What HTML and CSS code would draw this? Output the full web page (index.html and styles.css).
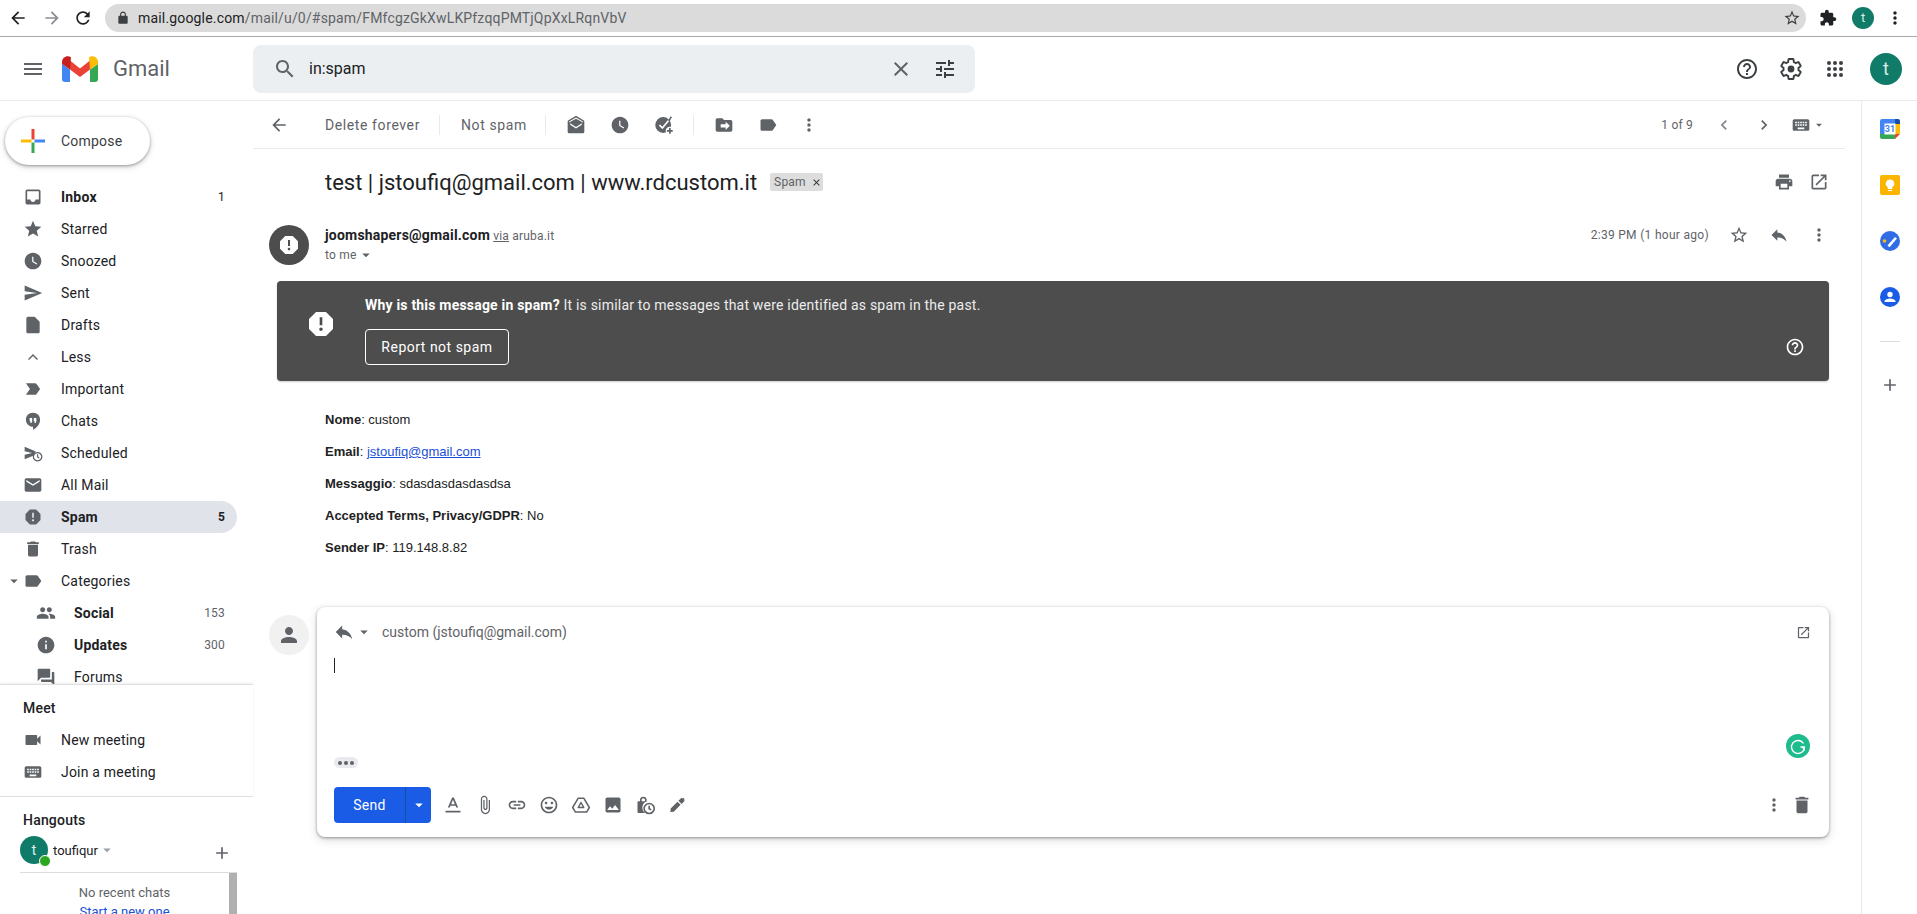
FILE: index.html
```html
<!DOCTYPE html>
<html lang="en">
<head>
<meta charset="utf-8">
<title>Gmail</title>
<link rel="stylesheet" href="styles.css">
</head>
<body>
<svg class="sprite" xmlns="http://www.w3.org/2000/svg">
<symbol id="menu" viewBox="0 0 24 24"><path d="M3 18h18v-2H3v2zm0-5h18v-2H3v2zm0-7v2h18V6H3z"/></symbol>
<symbol id="search" viewBox="0 0 24 24"><path d="M15.5 14h-.79l-.28-.27C15.41 12.59 16 11.11 16 9.5 16 5.91 13.09 3 9.5 3S3 5.91 3 9.5 5.91 16 9.5 16c1.61 0 3.09-.59 4.23-1.57l.27.28v.79l5 4.99L20.49 19l-4.99-5zm-6 0C7.01 14 5 11.99 5 9.5S7.01 5 9.5 5 14 7.01 14 9.5 11.99 14 9.5 14z"/></symbol>
<symbol id="close" viewBox="0 0 24 24"><path d="M19 6.41L17.59 5 12 10.59 6.41 5 5 6.41 10.59 12 5 17.59 6.41 19 12 13.41 17.59 19 19 17.59 13.41 12z"/></symbol>
<symbol id="tune" viewBox="0 0 24 24"><path d="M3 17v2h6v-2H3zM3 5v2h10V5H3zm10 16v-2h8v-2h-8v-2h-2v6h2zM7 9v2H3v2h4v2h2V9H7zm14 4v-2H11v2h10zm-6-4h2V7h4V5h-4V3h-2v6z"/></symbol>
<symbol id="help" viewBox="0 0 24 24"><path d="M11 18h2v-2h-2v2zm1-16C6.48 2 2 6.48 2 12s4.48 10 10 10 10-4.48 10-10S17.52 2 12 2zm0 18c-4.41 0-8-3.59-8-8s3.59-8 8-8 8 3.59 8 8-3.59 8-8 8zm0-14c-2.21 0-4 1.79-4 4h2c0-1.1.9-2 2-2s2 .9 2 2c0 2-3 1.75-3 5h2c0-2.25 3-2.5 3-5 0-2.21-1.79-4-4-4z"/></symbol>
<symbol id="gear" viewBox="0 0 24 24"><path fill="none" stroke="currentColor" stroke-width="1.9" d="M19.43 12.98c.04-.32.07-.64.07-.98s-.03-.66-.07-.98l2.11-1.65c.19-.15.24-.42.12-.64l-2-3.46c-.12-.22-.39-.3-.61-.22l-2.49 1c-.52-.4-1.08-.73-1.69-.98l-.38-2.65C14.46 2.18 14.25 2 14 2h-4c-.25 0-.46.18-.49.42l-.38 2.65c-.61.25-1.17.59-1.69.98l-2.49-1c-.23-.09-.49 0-.61.22l-2 3.46c-.13.22-.07.49.12.64l2.11 1.65c-.04.32-.07.65-.07.98s.03.66.07.98l-2.11 1.65c-.19.15-.24.42-.12.64l2 3.46c.12.22.39.3.61.22l2.49-1c.52.4 1.08.73 1.69.98l.38 2.65c.03.24.24.42.49.42h4c.25 0 .46-.18.49-.42l.38-2.65c.61-.25 1.17-.59 1.69-.98l2.49 1c.23.09.49 0 .61-.22l2-3.46c.12-.22.07-.49-.12-.64l-2.11-1.65z"/><circle cx="12" cy="12" r="3.4"/></symbol>
<symbol id="apps" viewBox="0 0 24 24"><circle cx="6" cy="6" r="2"/><circle cx="12" cy="6" r="2"/><circle cx="18" cy="6" r="2"/><circle cx="6" cy="12" r="2"/><circle cx="12" cy="12" r="2"/><circle cx="18" cy="12" r="2"/><circle cx="6" cy="18" r="2"/><circle cx="12" cy="18" r="2"/><circle cx="18" cy="18" r="2"/></symbol>
<symbol id="back" viewBox="0 0 24 24"><path d="M20 11H7.83l5.59-5.59L12 4l-8 8 8 8 1.41-1.41L7.83 13H20v-2z"/></symbol>
<symbol id="forward" viewBox="0 0 24 24"><path d="M4 11h12.17l-5.59-5.59L12 4l8 8-8 8-1.41-1.41L16.17 13H4v-2z"/></symbol>
<symbol id="refresh" viewBox="0 0 24 24"><path d="M17.65 6.35C16.2 4.9 14.21 4 12 4c-4.42 0-7.99 3.58-7.99 8s3.57 8 7.99 8c3.73 0 6.84-2.55 7.73-6h-2.08c-.82 2.33-3.04 4-5.65 4-3.31 0-6-2.69-6-6s2.69-6 6-6c1.66 0 3.14.69 4.22 1.78L13 11h7V4l-2.35 2.35z"/></symbol>
<symbol id="lock" viewBox="0 0 24 24"><path d="M18 8h-1V6c0-2.76-2.24-5-5-5S7 3.24 7 6v2H6c-1.1 0-2 .9-2 2v10c0 1.1.9 2 2 2h12c1.1 0 2-.9 2-2V10c0-1.1-.9-2-2-2zM9 6c0-1.66 1.34-3 3-3s3 1.34 3 3v2H9V6z"/></symbol>
<symbol id="puzzle" viewBox="0 0 24 24"><path d="M20.5 11H19V7c0-1.1-.9-2-2-2h-4V3.5C13 2.12 11.88 1 10.5 1S8 2.12 8 3.5V5H4c-1.1 0-1.99.9-1.99 2v3.8H3.5c1.49 0 2.7 1.21 2.7 2.7s-1.21 2.7-2.7 2.7H2V20c0 1.1.9 2 2 2h3.8v-1.5c0-1.49 1.21-2.7 2.7-2.7 1.49 0 2.7 1.21 2.7 2.7V22H17c1.1 0 2-.9 2-2v-4h1.5c1.38 0 2.5-1.12 2.5-2.5S21.88 11 20.5 11z"/></symbol>
<symbol id="inbox" viewBox="0 0 24 24"><path d="M19 3H5c-1.1 0-2 .9-2 2v14c0 1.1.9 2 2 2h14c1.1 0 2-.9 2-2V5c0-1.1-.9-2-2-2zm0 12h-4c0 1.66-1.35 3-3 3s-3-1.34-3-3H5V5h14v10z"/></symbol>
<symbol id="star" viewBox="0 0 24 24"><path d="M12 17.27L18.18 21l-1.64-7.03L22 9.24l-7.19-.61L12 2 9.19 8.63 2 9.24l5.46 4.73L5.82 21z"/></symbol>
<symbol id="star-o" viewBox="0 0 24 24"><path d="M22 9.24l-7.19-.62L12 2 9.19 8.63 2 9.24l5.46 4.73L5.82 21 12 17.27 18.18 21l-1.63-7.03L22 9.24zM12 15.4l-3.76 2.27 1-4.28-3.32-2.88 4.38-.38L12 6.1l1.71 4.04 4.38.38-3.32 2.88 1 4.28L12 15.4z"/></symbol>
<symbol id="clock" viewBox="0 0 24 24"><path d="M12 2C6.5 2 2 6.5 2 12s4.5 10 10 10 10-4.5 10-10S17.5 2 12 2zm4.2 14.2L11 13V7h1.5v5.2l4.5 2.7-.8 1.3z"/></symbol>
<symbol id="send" viewBox="0 0 24 24"><path d="M2.01 21L23 12 2.01 3 2 10l15 2-15 2z"/></symbol>
<symbol id="draft" viewBox="0 0 24 24"><path d="M14 2H6c-1.1 0-1.99.9-1.99 2L4 20c0 1.1.89 2 1.99 2H18c1.1 0 2-.9 2-2V8l-6-6z"/></symbol>
<symbol id="less" viewBox="0 0 24 24"><path d="M12 8.5l-6 6 1.2 1.2 4.8-4.8 4.8 4.8 1.2-1.2z"/></symbol>
<symbol id="important" viewBox="0 0 24 24"><path d="M3.5 18.99l11 .01c.67 0 1.27-.33 1.63-.84L20.5 12l-4.37-6.16c-.36-.51-.96-.84-1.63-.84l-11 .01L8.34 12 3.5 18.99z"/></symbol>
<symbol id="chats" viewBox="0 0 24 24"><path d="M12 2C6.8 2 3.5 5.8 3.5 10.5S7.3 19 12 19v3.5c4.9-2.4 8.500-7 8.500-12C20.500 5.800 17.200 2 12 2zM11 12.500l-1 2H8.500l1-2H8V8.500h3v4zm5 0l-1 2h-1.500l1-2H13V8.500h3v4z"/></symbol>
<symbol id="scheduled" viewBox="0 0 24 24"><path d="M2 19.500L13 15a6.500 6.500 0 0 1 2.500-4.700L2 4.500V10l9 2-9 2z"/><path fill="none" stroke="currentColor" stroke-width="1.5" d="M17.500 11.500a5 5 0 1 0 .01 0zM17.500 13.500v3.200l2 1.200"/></symbol>
<symbol id="mail" viewBox="0 0 24 24"><path d="M20 4H4c-1.100 0-1.990.9-1.990 2L2 18c0 1.100.9 2 2 2h16c1.100 0 2-.9 2-2V6c0-1.100-.9-2-2-2zm0 4l-8 5-8-5V6l8 5 8-5v2z"/></symbol>
<symbol id="report" viewBox="0 0 24 24"><path d="M15.730 3H8.270L3 8.270v7.460L8.270 21h7.460L21 15.730V8.270L15.730 3zM12 17.300c-.72 0-1.300-.58-1.300-1.300 0-.72.58-1.300 1.300-1.300.72 0 1.300.58 1.300 1.300 0 .72-.58 1.300-1.300 1.300zm1-4.300h-2V7h2v6z"/></symbol>
<symbol id="trash" viewBox="0 0 24 24"><path d="M6 19c0 1.100.9 2 2 2h8c1.100 0 2-.9 2-2V7H6v12zM19 4h-3.500l-1-1h-5l-1 1H5v2h14V4z"/></symbol>
<symbol id="label" viewBox="0 0 24 24"><path d="M17.630 5.840C17.270 5.330 16.670 5 16 5L5 5.010C3.900 5.010 3 5.900 3 7v10c0 1.100.9 1.990 2 1.990L16 19c.67 0 1.270-.33 1.630-.84L22 12l-4.370-6.160z"/></symbol>
<symbol id="people" viewBox="0 0 24 24"><path d="M16 11c1.660 0 2.990-1.340 2.990-3S17.660 5 16 5c-1.660 0-3 1.340-3 3s1.340 3 3 3zm-8 0c1.660 0 2.990-1.340 2.990-3S9.660 5 8 5C6.340 5 5 6.340 5 8s1.340 3 3 3zm0 2c-2.330 0-7 1.170-7 3.500V19h14v-2.500c0-2.330-4.670-3.500-7-3.500zm8 0c-.29 0-.62.02-.97.05 1.160.84 1.970 1.970 1.970 3.450V19h6v-2.500c0-2.330-4.670-3.500-7-3.500z"/></symbol>
<symbol id="info" viewBox="0 0 24 24"><path d="M12 2C6.480 2 2 6.480 2 12s4.480 10 10 10 10-4.480 10-10S17.520 2 12 2zm1 15h-2v-6h2v6zm0-8h-2V7h2v2z"/></symbol>
<symbol id="forum" viewBox="0 0 24 24"><path d="M21 6h-2v9H6v2c0 .55.45 1 1 1h11l4 4V7c0-.55-.45-1-1-1zm-4 6V3c0-.55-.45-1-1-1H3c-.55 0-1 .45-1 1v14l4-4h10c.55 0 1-.45 1-1z"/></symbol>
<symbol id="video" viewBox="0 0 24 24"><path d="M17 10.500V7c0-.55-.45-1-1-1H4c-.55 0-1 .45-1 1v10c0 .55.45 1 1 1h12c.55 0 1-.45 1-1v-3.500l4 4v-11l-4 4z"/></symbol>
<symbol id="keyboard" viewBox="0 0 24 24"><path d="M20 5H4c-1.100 0-1.990.9-1.990 2L2 17c0 1.100.9 2 2 2h16c1.100 0 2-.9 2-2V7c0-1.100-.9-2-2-2zm-9 3h2v2h-2V8zm0 3h2v2h-2v-2zM8 8h2v2H8V8zm0 3h2v2H8v-2zm-1 2H5v-2h2v2zm0-3H5V8h2v2zm9 7H8v-2h8v2zm0-4h-2v-2h2v2zm0-3h-2V8h2v2zm3 3h-2v-2h2v2zm0-3h-2V8h2v2z"/></symbol>
<symbol id="more" viewBox="0 0 24 24"><path d="M12 8c1.100 0 2-.9 2-2s-.9-2-2-2-2 .9-2 2 .9 2 2 2zm0 2c-1.100 0-2 .9-2 2s.9 2 2 2 2-.9 2-2-.9-2-2-2zm0 6c-1.100 0-2 .9-2 2s.9 2 2 2 2-.9 2-2-.9-2-2-2z"/></symbol>
<symbol id="print" viewBox="0 0 24 24"><path d="M19 8H5c-1.660 0-3 1.340-3 3v6h4v4h12v-4h4v-6c0-1.660-1.340-3-3-3zm-3 11H8v-5h8v5zm3-7c-.55 0-1-.45-1-1s.45-1 1-1 1 .45 1 1-.45 1-1 1zm-1-9H6v4h12V3z"/></symbol>
<symbol id="open" viewBox="0 0 24 24"><path d="M19 19H5V5h7V3H5c-1.110 0-2 .9-2 2v14c0 1.100.89 2 2 2h14c1.100 0 2-.9 2-2v-7h-2v7zM14 3v2h3.590l-9.830 9.830 1.410 1.410L19 6.410V10h2V3h-7z"/></symbol>
<symbol id="reply" viewBox="0 0 24 24"><path d="M10 9V5l-7 7 7 7v-4.100c5 0 8.500 1.600 11 5.100-1-5-4-10-11-11z"/></symbol>
<symbol id="person" viewBox="0 0 24 24"><path d="M12 12c2.210 0 4-1.790 4-4s-1.790-4-4-4-4 1.790-4 4 1.790 4 4 4zm0 2c-2.670 0-8 1.340-8 4v2h16v-2c0-2.660-5.330-4-8-4z"/></symbol>
<symbol id="attach" viewBox="0 0 24 24"><path d="M16.500 6v11.500c0 2.210-1.790 4-4 4s-4-1.790-4-4V5c0-1.380 1.120-2.500 2.500-2.500s2.500 1.120 2.500 2.500v10.500c0 .55-.45 1-1 1s-1-.45-1-1V6H10v9.500c0 1.380 1.120 2.500 2.500 2.500s2.500-1.120 2.500-2.500V5c0-2.210-1.790-4-4-4S7 2.790 7 5v12.500c0 3.040 2.460 5.500 5.500 5.500s5.500-2.460 5.500-5.500V6h-1.500z"/></symbol>
<symbol id="link" viewBox="0 0 24 24"><path d="M3.900 12c0-1.710 1.390-3.100 3.100-3.100h4V7H7c-2.760 0-5 2.240-5 5s2.240 5 5 5h4v-1.900H7c-1.710 0-3.100-1.390-3.100-3.100zM8 13h8v-2H8v2zm9-6h-4v1.900h4c1.710 0 3.100 1.390 3.100 3.100s-1.390 3.100-3.100 3.100h-4V17h4c2.760 0 5-2.240 5-5s-2.240-5-5-5z"/></symbol>
<symbol id="emoji" viewBox="0 0 24 24"><path d="M11.990 2C6.470 2 2 6.480 2 12s4.470 10 9.990 10C17.520 22 22 17.520 22 12S17.520 2 11.990 2zM12 20c-4.420 0-8-3.580-8-8s3.580-8 8-8 8 3.580 8 8-3.580 8-8 8zm3.500-9c.83 0 1.500-.67 1.500-1.500S16.330 8 15.500 8 14 8.670 14 9.500s.67 1.500 1.500 1.500zm-7 0c.83 0 1.500-.67 1.500-1.500S9.330 8 8.500 8 7 8.670 7 9.500 7.670 11 8.500 11zm3.500 6.500c2.330 0 4.310-1.460 5.110-3.500H6.890c.8 2.040 2.780 3.500 5.110 3.500z"/></symbol>
<symbol id="image" viewBox="0 0 24 24"><path d="M21 19V5c0-1.100-.9-2-2-2H5c-1.100 0-2 .9-2 2v14c0 1.100.9 2 2 2h14c1.100 0 2-.9 2-2zM8.500 13.500l2.500 3.010L14.500 12l4.500 6H5l3.500-4.500z"/></symbol>
<symbol id="drive" viewBox="0 0 24 24"><path fill="none" stroke="currentColor" stroke-width="1.800" stroke-linejoin="round" d="M8.500 4h7L22 15l-3.300 5.500H5.300L2 15zM12 9l-3.300 6h6.600z"/></symbol>
<symbol id="confidential" viewBox="0 0 24 24"><path d="M15.500 7.500H14V6a4 4 0 0 0-8 0v1.500H4.500c-1 0-1.500.7-1.500 1.500v11c0 .8.600 1.500 1.500 1.500h8a7.500 7.500 0 0 1 3-13.900zM8 6a2 2 0 0 1 4 0v1.500H8z"/><path fill="none" stroke="currentColor" stroke-width="1.900" d="M17 10.200a6 6 0 1 0 .01 0zM17 13v3.500l2.400 1.400"/></symbol>
<symbol id="pen" viewBox="0 0 24 24"><path d="M4 20.500l.4-4.200 8.200-8.200 3.700 3.700-8.200 8.200zM13.700 7l3.800-3.800 1.100 1.100.9-.9 1.600 1.600-.9.900 1.100 1.100-3.800 3.800z"/></symbol>
<symbol id="text-a" viewBox="0 0 24 24"><path d="M3 19v2h18v-2H3zm6-6.200h6l.9 2.200h2.300L13 3h-2L5.800 15h2.300l.9-2.200zM12 5.700L14.200 11H9.800L12 5.700z"/></symbol>
<symbol id="drop" viewBox="0 0 24 24"><path d="M7 10l5 5 5-5z"/></symbol>
<symbol id="left" viewBox="0 0 24 24"><path d="M15.410 7.410L14 6l-6 6 6 6 1.410-1.410L10.830 12z"/></symbol>
<symbol id="right" viewBox="0 0 24 24"><path d="M10 6L8.590 7.410 13.170 12l-4.580 4.590L10 18l6-6z"/></symbol>
<symbol id="add" viewBox="0 0 24 24"><path d="M19 13h-6v6h-2v-6H5v-2h6V5h2v6h6v2z"/></symbol>
<symbol id="unread" viewBox="0 0 24 24"><path d="M21.990 8c0-.72-.37-1.350-.94-1.700L12 1 2.950 6.300C2.380 6.650 2 7.280 2 8v12c0 1.100.9 2 2 2h16c1.100 0 2-.9 2-2l-.01-12zM12 3l8.260 4.840V9L12 4.500 3.740 9V7.840zM5 10l7 4.500 7-4.500v1.800l-7 4.500-7-4.500z"/></symbol>
<symbol id="addtask" viewBox="0 0 24 24"><circle cx="11" cy="12" r="9.500"/><path fill="none" stroke="#fff" stroke-width="2" d="M6.500 12l3.500 3.500 7.500-9"/><path d="M17 6.500L20 1.500l1.500 1.200-3 5z"/><circle cx="19" cy="19" r="5" fill="#fff"/><path d="M18 15.500h2v2.500h2.500v2H20v2.500h-2V20h-2.500v-2H18z"/></symbol>
<symbol id="moveto" viewBox="0 0 24 24"><path d="M20 6h-8l-2-2H4c-1.100 0-2 .9-2 2v12c0 1.100.9 2 2 2h16c1.100 0 2-.9 2-2V8c0-1.100-.9-2-2-2zm-6 12v-3H8v-4h6V8l5 5-5 5z"/></symbol>
</svg>

<header class="chrome">
  <svg class="i i-20 dark"><use href="#back"/></svg>
  <svg class="i i-20 faded"><use href="#forward"/></svg>
  <svg class="i i-20 dark"><use href="#refresh"/></svg>
  <div class="omnibox">
    <svg class="i i-14 lockicon"><use href="#lock"/></svg>
    <span class="url"><b class="host">mail.google.com</b>/mail/u/0/#spam/FMfcgzGkXwLKPfzqqPMTjQpXxLRqnVbV</span>
    <svg class="i i-18 omni-star"><use href="#star-o"/></svg>
  </div>
  <svg class="i i-18 dark puzzle"><use href="#puzzle"/></svg>
  <span class="chrome-avatar">t</span>
  <svg class="i i-20 dark chrome-more"><use href="#more"/></svg>
</header>

<header class="appbar">
  <svg class="i i-24 burger"><use href="#menu"/></svg>
  <svg class="gmail-logo" viewBox="0 0 36 26" xmlns="http://www.w3.org/2000/svg">
    <path fill="#4285f4" d="M0 8v15a3 3 0 0 0 3 3h5V13.500z"/>
    <path fill="#34a853" d="M28 13.500V26h5a3 3 0 0 0 3-3V8z"/>
    <path fill="#ea4335" d="M8 4.500L18 12.500 28 4.500v9L18 21 8 13.500z"/>
    <path fill="#c5221f" d="M0 8V6C0 1 5.500-1.500 9 1.300l-1 12.200z"/>
    <path fill="#fbbc04" d="M27 1.300C30.500-1.500 36 1 36 6v2l-8 5.500z"/>
  </svg>
  <span class="wordmark">Gmail</span>
  <div class="searchbox">
    <svg class="i i-24"><use href="#search"/></svg>
    <span class="query">in:spam</span>
    <svg class="i i-24 searchclose"><use href="#close"/></svg>
    <svg class="i i-24 dark-gray"><use href="#tune"/></svg>
  </div>
  <div class="appbar-right">
    <svg class="i i-24 dark-gray"><use href="#help"/></svg>
    <svg class="i i-24 dark-gray"><use href="#gear"/></svg>
    <svg class="i i-24 dark-gray"><use href="#apps"/></svg>
    <span class="account">t</span>
  </div>
</header>

<div class="workspace">
  <aside class="sidebar">
    <div class="labels">
      <button class="compose">
        <svg class="plus" viewBox="0 0 24 24" xmlns="http://www.w3.org/2000/svg">
          <path fill="#ea4335" d="M10.500 0h3v10.500h-3z"/>
          <path fill="#4285f4" d="M13.500 10.500H24v3H13.500z"/>
          <path fill="#34a853" d="M10.500 13.500h3V24h-3z"/>
          <path fill="#fbbc04" d="M0 10.500h10.500v3H0z"/>
        </svg>
        Compose
      </button>
      <nav class="navlist">
        <a class="nav strong"><svg class="i i-20"><use href="#inbox"/></svg><span>Inbox</span><em>1</em></a>
        <a class="nav"><svg class="i i-20"><use href="#star"/></svg><span>Starred</span></a>
        <a class="nav"><svg class="i i-20"><use href="#clock"/></svg><span>Snoozed</span></a>
        <a class="nav"><svg class="i i-20"><use href="#send"/></svg><span>Sent</span></a>
        <a class="nav"><svg class="i i-20"><use href="#draft"/></svg><span>Drafts</span></a>
        <a class="nav"><svg class="i i-20"><use href="#less"/></svg><span>Less</span></a>
        <a class="nav"><svg class="i i-20"><use href="#important"/></svg><span>Important</span></a>
        <a class="nav"><svg class="i i-20"><use href="#chats"/></svg><span>Chats</span></a>
        <a class="nav"><svg class="i i-20"><use href="#scheduled"/></svg><span>Scheduled</span></a>
        <a class="nav"><svg class="i i-20"><use href="#mail"/></svg><span>All Mail</span></a>
        <a class="nav strong active"><svg class="i i-20"><use href="#report"/></svg><span>Spam</span><em>5</em></a>
        <a class="nav"><svg class="i i-20"><use href="#trash"/></svg><span>Trash</span></a>
        <a class="nav category"><svg class="i i-14 catcaret"><use href="#drop"/></svg><svg class="i i-20"><use href="#label"/></svg><span>Categories</span></a>
        <a class="nav sub strong"><svg class="i i-20"><use href="#people"/></svg><span>Social</span><em class="plain">153</em></a>
        <a class="nav sub strong"><svg class="i i-20"><use href="#info"/></svg><span>Updates</span><em class="plain">300</em></a>
        <a class="nav sub"><svg class="i i-20"><use href="#forum"/></svg><span>Forums</span></a>
      </nav>
    </div>
    <section class="meet">
      <h3 class="sidehead">Meet</h3>
      <a class="nav"><svg class="i i-20"><use href="#video"/></svg><span>New meeting</span></a>
      <a class="nav"><svg class="i i-20"><use href="#keyboard"/></svg><span>Join a meeting</span></a>
    </section>
    <section class="hangouts">
      <h3 class="sidehead">Hangouts</h3>
      <div class="hg-user">
        <span class="hg-avatar">t<i class="online"></i></span>
        <span class="hg-name">toufiqur</span>
        <svg class="i i-18 lightcaret"><use href="#drop"/></svg>
        <svg class="i i-20 hg-add"><use href="#add"/></svg>
      </div>
      <div class="hg-list">
        <div class="hg-empty">
          <p>No recent chats</p>
          <a>Start a new one</a>
        </div>
        <div class="hg-scroll"></div>
      </div>
    </section>
  </aside>

  <main class="main">
    <div class="toolbar">
      <svg class="i i-20"><use href="#back"/></svg>
      <span class="tb-text first">Delete forever</span>
      <span class="sep s1"></span>
      <span class="tb-text second">Not spam</span>
      <span class="sep s2"></span>
      <div class="tb-group">
        <svg class="i i-20"><use href="#unread"/></svg>
        <svg class="i i-20"><use href="#clock"/></svg>
        <svg class="i i-20"><use href="#addtask"/></svg>
      </div>
      <span class="sep s3"></span>
      <div class="tb-group">
        <svg class="i i-20"><use href="#moveto"/></svg>
        <svg class="i i-20"><use href="#label"/></svg>
        <svg class="i i-20 tb-more"><use href="#more"/></svg>
      </div>
      <div class="tb-right">
        <span class="pager">1 of 9</span>
        <svg class="i i-20 lighter"><use href="#left"/></svg>
        <svg class="i i-20"><use href="#right"/></svg>
        <span class="kbd"><svg class="i i-20"><use href="#keyboard"/></svg><svg class="i i-14 kbdcaret"><use href="#drop"/></svg></span>
      </div>
    </div>

    <div class="subject-row">
      <h1 class="subject">test | jstoufiq@gmail.com | www.rdcustom.it</h1>
      <span class="tag">Spam <svg class="i tag-x"><use href="#close"/></svg></span>
      <div class="subject-tools">
        <svg class="i i-20"><use href="#print"/></svg>
        <svg class="i i-20"><use href="#open"/></svg>
      </div>
    </div>

    <div class="msg-head">
      <span class="warn-avatar"><svg class="i i-24 white"><use href="#report"/></svg></span>
      <div class="sender">
        <div class="sender-line"><b>joomshapers@gmail.com</b> <u>via</u> aruba.it</div>
        <div class="to-line">to me <svg class="i i-18"><use href="#drop"/></svg></div>
      </div>
      <div class="msg-tools">
        <span class="time">2:39 PM (1 hour ago)</span>
        <svg class="i i-20"><use href="#star-o"/></svg>
        <svg class="i i-20"><use href="#reply"/></svg>
        <svg class="i i-20"><use href="#more"/></svg>
      </div>
    </div>

    <div class="spam-banner">
      <svg class="i banner-icon white"><use href="#report"/></svg>
      <div class="banner-body">
        <p><b>Why is this message in spam?</b> It is similar to messages that were identified as spam in the past.</p>
        <button class="report-btn">Report not spam</button>
      </div>
      <svg class="i i-20 white banner-help"><use href="#help"/></svg>
    </div>

    <div class="mail-body">
      <p><b>Nome</b>: custom</p>
      <p><b>Email</b>: <a>jstoufiq@gmail.com</a></p>
      <p><b>Messaggio</b>: sdasdasdasdasdsa</p>
      <p><b>Accepted Terms, Privacy/GDPR</b>: No</p>
      <p><b>Sender IP</b>: 119.148.8.82</p>
    </div>

    <div class="reply-row">
      <span class="person-avatar"><svg class="i i-24"><use href="#person"/></svg></span>
      <div class="reply-card">
        <div class="reply-head">
          <svg class="i reply-arrow"><use href="#reply"/></svg>
          <svg class="i i-18"><use href="#drop"/></svg>
          <span class="recipient">custom (jstoufiq@gmail.com)</span>
          <svg class="i reply-open"><use href="#open"/></svg>
        </div>
        <div class="reply-body">
          <span class="caret"></span>
          <span class="dots"><i></i><i></i><i></i></span>
          <span class="grammarly">
            <svg viewBox="0 0 24 24" xmlns="http://www.w3.org/2000/svg"><path fill="none" stroke="#fff" stroke-width="1.400" d="M17.500 9.500A6.500 6.500 0 1 0 18.500 13H14.500"/><path fill="#fff" d="M18.800 13.300v3.700l-3.200-3.700z"/></svg>
          </span>
        </div>
        <div class="reply-foot">
          <div class="send"><span class="send-main">Send</span><span class="send-more"><svg class="i i-18 white"><use href="#drop"/></svg></span></div>
          <div class="fmt">
            <svg class="i i-20"><use href="#text-a"/></svg>
            <svg class="i i-20"><use href="#attach"/></svg>
            <svg class="i i-20"><use href="#link"/></svg>
            <svg class="i i-20"><use href="#emoji"/></svg>
            <svg class="i i-20"><use href="#drive"/></svg>
            <svg class="i i-20"><use href="#image"/></svg>
            <svg class="i i-20"><use href="#confidential"/></svg>
            <svg class="i i-20"><use href="#pen"/></svg>
          </div>
          <div class="foot-right">
            <svg class="i i-20"><use href="#more"/></svg>
            <svg class="i foot-trash"><use href="#trash"/></svg>
          </div>
        </div>
      </div>
    </div>
  </main>

  <aside class="rail">
    <svg class="rail-icon" viewBox="0 0 20 20" xmlns="http://www.w3.org/2000/svg">
      <path fill="#4285f4" d="M2 0h14v5H5v11H0V2a2 2 0 0 1 2-2z"/>
      <path fill="#174ea6" d="M15 0h3a2 2 0 0 1 2 2v3h-5z"/>
      <path fill="#34a853" d="M0 15h15v5H2a2 2 0 0 1-2-2z"/>
      <path fill="#fbbc04" d="M15 5h5v10h-5z"/>
      <path fill="#ea4335" d="M15 15h5l-5 5z"/>
      <rect x="4.500" y="4.500" width="11" height="11" fill="#fff"/>
      <text x="10" y="13.400" class="cal-num">31</text>
    </svg>
    <svg class="rail-icon" viewBox="0 0 20 20" xmlns="http://www.w3.org/2000/svg">
      <rect width="20" height="20" rx="2" fill="#fbb400"/>
      <path fill="#fff" d="M10 4.500a4.200 4.200 0 0 0-2.200 7.800V14h4.400v-1.700A4.200 4.200 0 0 0 10 4.500zM8 15h4v1H8z"/>
    </svg>
    <svg class="rail-icon" viewBox="0 0 20 20" xmlns="http://www.w3.org/2000/svg">
      <circle cx="10" cy="10" r="10" fill="#2f6ce5"/>
      <circle cx="4.500" cy="10" r="1.800" fill="#fbbc04"/>
      <path fill="#fff" d="M7.500 14.500L15 6l2 1.600-7.500 8.600z"/>
    </svg>
    <svg class="rail-icon" viewBox="0 0 20 20" xmlns="http://www.w3.org/2000/svg">
      <circle cx="10" cy="10" r="10" fill="#1a5ce6"/>
      <circle cx="10" cy="7.500" r="2.700" fill="#fff"/>
      <path fill="#fff" d="M4.500 14.500c0-2 3.500-3 5.500-3s5.500 1 5.500 3v.5h-11z"/>
    </svg>
    <span class="rail-line"></span>
    <svg class="i i-20 rail-add"><use href="#add"/></svg>
  </aside>
</div>
</body>
</html>
```
FILE: styles.css
```css
* { box-sizing: border-box; }
html, body { margin: 0; padding: 0; }
body {
  width: 1917px; height: 914px; overflow: hidden;
  display: flex; flex-direction: column;
  background: #fff; color: #202124;
  font-family: Roboto, "Liberation Sans", sans-serif; font-size: 14px;
}
.sprite { display: none; }
p, h1, h3 { margin: 0; font-weight: 400; }
em { font-style: normal; }
button { font-family: inherit; border: 0; background: none; padding: 0; }

.i { fill: #5f6368; color: #5f6368; flex: none; display: block; }
.i-14 { width: 14px; height: 14px; }
.i-18 { width: 18px; height: 18px; }
.i-20 { width: 20px; height: 20px; }
.i-24 { width: 24px; height: 24px; }
.dark { fill: #202124; color: #202124; }
.dark-gray { fill: #3c4043; color: #3c4043; }
.faded { fill: #8a8c90; }
.white { fill: #fff; color: #fff; }
.lighter { fill: #80868b; }

/* browser chrome */
.chrome {
  height: 37px; flex: none; display: flex; align-items: center;
  padding: 0 12px 1px 8px; border-bottom: 1px solid #a9a9a9; gap: 0;
}
.chrome > svg:nth-child(2) { margin-left: 14px; }
.chrome > svg:nth-child(3) { margin-left: 11px; }
.omnibox {
  margin-left: 12px; width: 1703px; height: 28px; border-radius: 14px;
  background: #dbdbdb; display: flex; align-items: center; padding: 0 5px 0 11px;
}
.lockicon { fill: #3c4043; }
.url { margin-left: 8px; font-size: 14px; color: #5f6368; letter-spacing: .17px; flex: 1; }
.host { font-weight: 400; color: #202124; }
.omni-star { fill: #3c4043; }
.puzzle { margin-left: 13px; }
.chrome-avatar {
  margin-left: 15px; width: 22px; height: 22px; border-radius: 50%;
  background: #0f7b68; color: #d9ece8; font-size: 13px;
  display: flex; align-items: center; justify-content: center;
}
.chrome-more { margin-left: 11px; }

/* gmail header */
.appbar {
  height: 64px; flex: none; display: flex; align-items: center;
  border-bottom: 1px solid #e8eaed; padding-left: 21px;
}
.burger { fill: #5f6368; }
.gmail-logo { width: 36px; height: 26px; margin-left: 17px; flex: none; }
.wordmark { margin-left: 15px; font-size: 22px; color: #5f6368; width: 140px; }
.searchbox {
  width: 722px; height: 48px; background: #eceff1; border-radius: 8px;
  display: flex; align-items: center; padding: 0 18px 0 20px;
}
.query { margin-left: 12px; font-size: 16px; flex: 1; color: #202124; }
.searchclose { margin-right: 20px; }
.appbar-right { margin-left: auto; display: flex; align-items: center; gap: 20px; padding-right: 15px; }
.account {
  margin-left: 3px; width: 32px; height: 32px; border-radius: 50%;
  background: #0f7b68; color: #d9ece8; font-size: 18px;
  display: flex; align-items: center; justify-content: center;
}

/* layout */
.workspace { flex: 1; display: flex; min-height: 0; }
.sidebar { width: 253px; flex: none; display: flex; flex-direction: column; }
.labels { height: 583px; overflow: hidden; flex: none; }
.compose {
  margin: 16px 0 16px 5px; width: 145px; height: 48px; border-radius: 24px;
  display: flex; align-items: center; background: #fff; font-size: 14px; color: #3c4043;
  padding-left: 16px; gap: 16px; letter-spacing: .2px;
  box-shadow: 0 1px 3px rgba(60,64,67,.45), 0 2px 6px rgba(60,64,67,.2);
}
.plus { width: 24px; height: 24px; flex: none; }
.nav {
  height: 32px; display: flex; align-items: center; width: 237px; position: relative;
  padding: 0 12px 0 23px; border-radius: 0 16px 16px 0; letter-spacing: .2px; color: #202124;
}
.nav span { margin-left: 18px; flex: 1; }
.nav em { font-size: 12px; letter-spacing: .2px; font-weight: 400; }
.nav.strong span { font-weight: 700; }
.nav.active { background: #e0e4ea; }
.nav.active em { font-weight: 700; }
.nav em.plain { color: #5f6368; }
.category { padding-left: 5px; }
.catcaret { width: 18px; height: 18px; margin-right: 0; }
.sub { padding-left: 36px; }
.sub span { margin-left: 18px; }

.meet {
  height: 112px; flex: none; border-top: 1px solid #e0e0e0;
  box-shadow: 0 -1px 2px rgba(0,0,0,.08); position: relative; background: #fff;
}
.sidehead { height: 24px; line-height: 24px; margin: 11px 0 4px 23px; font-size: 14px; letter-spacing: .2px; color: #202124; font-weight: 500; }
.hangouts { flex: 1; border-top: 1px solid #e0e0e0; min-height: 0; overflow: hidden; }
.hangouts .sidehead { margin-bottom: 0; }
.hg-user { height: 30px; display: flex; align-items: center; padding-left: 20px; margin-top: 3px; }
.hg-avatar {
  width: 28px; height: 28px; border-radius: 50%; background: #0f7b68; color: #d9ece8;
  position: relative; display: flex; align-items: center; justify-content: center; font-size: 15px; flex: none;
}
.online { position: absolute; right: -3px; bottom: -3px; width: 12px; height: 12px; border-radius: 50%; background: #2da61f; border: 1px solid #fff; }
.hg-name { margin-left: 5px; font-size: 13px; color: #202124; }
.lightcaret { fill: #9aa0a6; }
.hg-add { margin-left: auto; margin-right: 21px; margin-top: 6px; }
.hg-list {
  display: flex; margin: 0 16px 0 20px; margin-top: 7px; height: 46px; border-top: 1px solid #dcdcdc;
}
.hg-empty { flex: 1; text-align: center; font-size: 13px; color: #5f6368; padding-top: 11px; }
.hg-empty p { line-height: 18px; }
.hg-empty a { color: #1a4fd6; line-height: 19px; }
.hg-scroll { width: 8px; background: #b0b0b0; flex: none; }

/* main */
.main { flex: 1; min-width: 0; padding-right: 16px; }
.toolbar {
  height: 48px; display: flex; align-items: center; padding: 0 19px 0 16px;
  border-bottom: 1px solid #e8eaed;
}
.tb-text { font-size: 14px; color: #5f6368; letter-spacing: .6px; white-space: nowrap; }
.first { margin-left: 36px; }
.second { margin-left: 21px; }
.sep { width: 1px; height: 20px; background: #e8eaed; flex: none; }
.s1 { margin-left: 19px; }
.s2 { margin-left: 18px; }
.s3 { margin-left: 19px; }
.tb-group { display: flex; gap: 24px; margin-left: 20px; }
.tb-more { margin-left: -3px; }
.tb-right { margin-left: auto; display: flex; align-items: center; gap: 20px; }
.pager { font-size: 12px; color: #5f6368; letter-spacing: .2px; margin-right: 1px; }
.kbd { display: flex; align-items: center; margin-left: -3px; }
.kbdcaret { margin-left: 1px; }

.subject-row { height: 66px; display: flex; align-items: center; padding: 0 6px 0 72px; }
.subject { font-family: Roboto, sans-serif; font-size: 22px; color: #202124; white-space: nowrap; }
.tag {
  margin-left: 13px; height: 18px; width: 53px; background: #dddddd; border-radius: 2px;
  font-size: 12px; letter-spacing: .2px; color: #5f6368; display: flex; align-items: center; padding-left: 4px; gap: 5px;
}
.tag-x { width: 11px; height: 11px; fill: #333; }
.subject-tools { margin-left: auto; display: flex; gap: 15px; padding-right: 10px; }

.msg-head { margin-top: 10px; height: 40px; display: flex; padding-left: 16px; padding-right: 6px; }
.warn-avatar {
  width: 40px; height: 40px; border-radius: 50%; background: #4d4d4d; flex: none;
  display: flex; align-items: center; justify-content: center;
}
.sender { margin-left: 16px; }
.sender-line { height: 20px; line-height: 20px; font-size: 12px; color: #5f6368; letter-spacing: .2px; }
.sender-line b { font-size: 14px; color: #202124; letter-spacing: .2px; font-weight: 700; }
.to-line { height: 20px; display: flex; align-items: center; font-size: 12px; color: #5f6368; gap: 0; letter-spacing: .2px; }
.msg-tools { margin-left: auto; display: flex; align-items: center; gap: 20px; height: 20px; padding-right: 10px; }
.time { font-size: 12px; color: #5f6368; letter-spacing: .3px; }

.spam-banner {
  margin: 16px 16px 0 24px; height: 100px; background: #4d4d4d; border-radius: 4px;
  display: flex; color: #fff; position: relative;
  box-shadow: 0 1px 2px rgba(0,0,0,.2);
}
.banner-icon { width: 32px; height: 36px; margin: 25px 0 0 28px; }
.banner-body { margin-left: 28px; padding-top: 14px; flex: 1; }
.banner-body p { font-size: 14px; line-height: 20px; letter-spacing: .2px; color: #ececec; }
.banner-body b { color: #fff; }
.report-btn {
  display: block; margin-top: 14px; width: 144px; height: 36px; border: 1px solid #fff; border-radius: 4px;
  color: #fff; font-size: 14px; letter-spacing: .5px;
}
.banner-help { margin: 56px 24px 0 0; }

.mail-body { margin-top: 23px; padding-left: 72px; font-family: "Liberation Sans", Arial, sans-serif; font-size: 13px; color: #222; }
.mail-body p { height: 32px; line-height: 32px; }
.mail-body a { color: #1a4fd6; text-decoration: underline; }

.reply-row { margin-top: 43px; display: flex; padding-left: 16px; padding-right: 16px; gap: 8px; }
.person-avatar {
  width: 40px; height: 40px; border-radius: 50%; background: #f1f1f1; flex: none; margin-top: 8px;
  display: flex; align-items: center; justify-content: center;
}
.reply-card {
  flex: 1; height: 230px; border-radius: 8px; background: #fff; display: flex; flex-direction: column;
  box-shadow: 0 1px 3px rgba(60,64,67,.5), 0 3px 10px rgba(60,64,67,.18);
}
.reply-head { height: 50px; flex: none; display: flex; align-items: center; padding: 0 18px 0 16px; }
.reply-arrow { width: 22px; height: 22px; }
.recipient { margin-left: 9px; font-size: 14px; color: #5f6368; }
.reply-head > .i-18 { margin-left: 0; }
.reply-head .reply-open { margin-left: auto; width: 15px; height: 15px; }
.reply-body { flex: 1; position: relative; padding: 1px 17px 0; }
.caret { display: block; width: 1px; height: 15px; background: #202124; }
.dots {
  position: absolute; left: 17px; bottom: 19px; width: 24px; height: 11px; border-radius: 6px;
  background: #e8eaed; display: flex; align-items: center; justify-content: center; gap: 2px;
}
.dots i { width: 4px; height: 4px; border-radius: 50%; background: #5f6368; }
.grammarly {
  position: absolute; right: 19px; top: 77px; width: 24px; height: 24px; border-radius: 50%; background: #1dbb8d; display: block;
}
.grammarly svg { width: 24px; height: 24px; display: block; }
.reply-foot { height: 50px; flex: none; display: flex; align-items: flex-start; padding: 0 17px; }
.send { display: flex; height: 36px; width: 97px; border-radius: 4px; overflow: hidden; background: #1a5ce6; color: #fff; }
.send-main { width: 72px; display: flex; align-items: center; justify-content: center; font-size: 14px; letter-spacing: .3px; border-right: 1px solid #174ea6; }
.send-more { flex: 1; display: flex; align-items: center; justify-content: center; }
.fmt { margin-left: 12px; display: flex; gap: 12px; height: 36px; align-items: center; }
.foot-right { margin-left: auto; display: flex; align-items: center; gap: 7px; height: 36px; }
.foot-trash { width: 22px; height: 22px; margin-right: -1px; }

.rail { width: 56px; flex: none; border-left: 1px solid #e8eaed; display: flex; flex-direction: column; align-items: center; padding-top: 18px; gap: 36px; }
.rail-icon { width: 20px; height: 20px; flex: none; display: block; }
.cal-num { font-family: Roboto, sans-serif; font-size: 9px; font-weight: 700; fill: #4285f4; text-anchor: middle; }
.rail-line { width: 20px; height: 1px; background: #dadce0; flex: none; margin-top: -2px; margin-bottom: -1px; }
.rail-add { margin-top: -2px; }
```
